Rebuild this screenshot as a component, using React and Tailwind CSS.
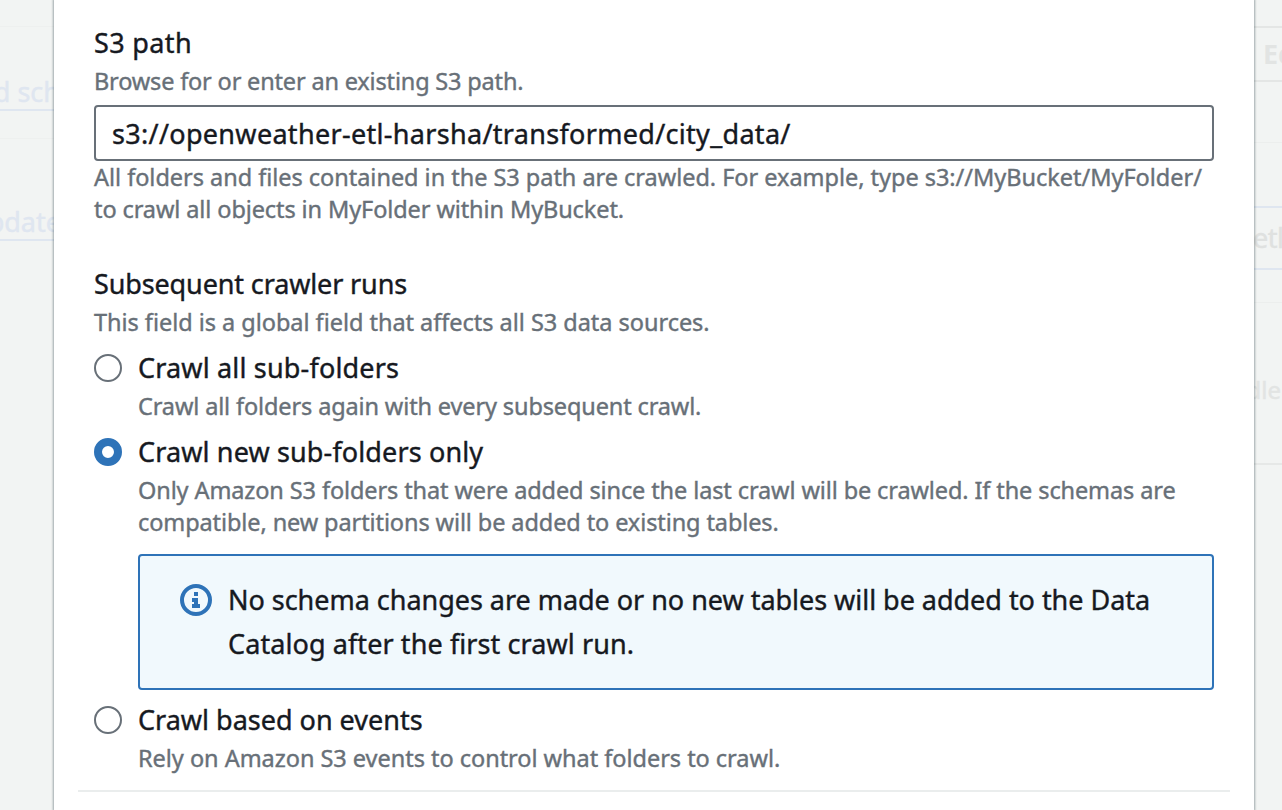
const label = "h-11 text-[27px] leading-[44px] text-[#16191f] whitespace-nowrap [-webkit-text-stroke:0.4px]";
const hint = "h-8 text-[23.5px] leading-[30px] text-[#687078] whitespace-nowrap [-webkit-text-stroke:0.4px]";

function Radio({ checked }) {
  return (
    <span
      className={
        checked
          ? "mt-2 size-7 shrink-0 rounded-full border-[8.5px] border-[#2e73b8] bg-white"
          : "mt-2 size-7 shrink-0 rounded-full border-2 border-[#687078] bg-white"
      }
    />
  );
}

function InfoIcon() {
  return (
    <svg viewBox="0 0 32 32" className="mt-1.5 size-8 shrink-0" fill="#2e73b8">
      <circle cx="16" cy="16" r="14" fill="none" stroke="#2e73b8" strokeWidth="4" />
      <path d="M14 8h4v4h-4zM12 14h6v6h2v4h-8v-4h2v-2h-2z" />
    </svg>
  );
}

function LeftBackdrop() {
  return (
    <div className="flex w-[54px] shrink-0 flex-col overflow-hidden bg-[#f2f4f3]">
      <div className="h-[27px] shrink-0 border-b border-[#eef0ef]" />
      <div className="flex h-[84px] shrink-0 items-end justify-end border-b-2 border-[#dfe6f0]">
        <span className="mr-[-6px] h-[38px] text-[27px] leading-[41px] whitespace-nowrap text-[#dfe6f0] [-webkit-text-stroke:0.4px]">d sch</span>
      </div>
      <div className="h-7 shrink-0 border-b border-[#eef0ef]" />
      <div className="flex h-[102px] shrink-0 items-end justify-end border-b-2 border-[#dfe6f0]">
        <span className="mr-[-7px] h-[38px] text-[27px] leading-[41px] whitespace-nowrap text-[#dfe6f0] [-webkit-text-stroke:0.4px]">pdate</span>
      </div>
    </div>
  );
}

function RightBackdrop() {
  return (
    <div className="flex w-7 shrink-0 flex-col overflow-hidden bg-[#f2f4f3]">
      <div className="h-[26px] shrink-0" />
      <div className="h-14 shrink-0 border-y-2 border-[#e4e6e5] pl-[9px] text-[27px] leading-[52px] font-bold whitespace-nowrap text-[#e2e4e3]">
        Ed
      </div>
      <div className="h-[61px] shrink-0 border-b border-[#eceeed]" />
      <div className="h-[63px] shrink-0" />
      <div className="h-16 shrink-0 border-y-2 border-[#dfe6f0] text-[27px] leading-[60px] whitespace-nowrap text-[#dfe1e0] [-webkit-text-stroke:0.4px]">
        <span className="ml-[-1px] tracking-[-0.5px]">etl</span>
      </div>
      <div className="h-[33px] shrink-0 border-b border-[#eceeed]" />
      <div className="flex h-[162px] shrink-0 items-start justify-end border-b-2 border-[#e6e8e7] pt-[71px]">
        <span className="mr-px text-[24px] leading-8 whitespace-nowrap text-[#e2e4e3] [-webkit-text-stroke:0.4px]">dle</span>
      </div>
    </div>
  );
}

export default function App() {
  return (
    <div className="flex h-[810px] w-[1282px] overflow-hidden bg-[#f2f4f3] font-['Noto_Sans',sans-serif]">
      <LeftBackdrop />
      <main className="relative z-10 flex w-[1200px] shrink-0 flex-col bg-white px-10 pt-[21px] shadow-[0_0_2px_1px_rgba(0,28,36,0.35)]">
        <div className={label}><span className="tracking-[0.36px]">S3 path</span></div>
        <div className={hint + " mt-px"}><span className="tracking-[-0.17px]">Browse for or enter an existing S3 path.</span></div>
        <div className="mt-[7px] flex h-14 shrink-0 items-center rounded-[4px] border-2 border-[#687078] px-4">
          <span className="pt-0.5 text-[27px] leading-[44px] tracking-[0.31px] whitespace-nowrap text-[#16191f] [-webkit-text-stroke:0.4px]">s3://openweather-etl-harsha/transformed/city_data/</span>
        </div>
        <div className="mt-px">
          <div className={hint}><span className="tracking-[-0.03px]">All folders and files contained in the S3 path are crawled. For example, type s3://MyBucket/MyFolder/</span></div>
          <div className={hint}><span className="tracking-[-0.1px]">to crawl all objects in MyFolder within MyBucket.</span></div>
        </div>

        <div className="mt-9">
          <div className={label}><span className="tracking-[-0.13px]">Subsequent crawler runs</span></div>
          <div className={hint + " mt-px"}><span className="tracking-[-0.03px]">This field is a global field that affects all S3 data sources.</span></div>
        </div>

        <div className="mt-[7px] flex gap-4">
          <Radio />
          <div>
            <div className={label}><span className="tracking-[0.17px]">Crawl all sub-folders</span></div>
            <div className={hint + " mt-px"}><span className="tracking-[-0.13px]">Crawl all folders again with every subsequent crawl.</span></div>
          </div>
        </div>

        <div className="mt-[7px] flex gap-4">
          <Radio checked />
          <div className="grow">
            <div className={label}><span className="tracking-[0.13px]">Crawl new sub-folders only</span></div>
            <div className={hint + " mt-px"}><span className="tracking-[-0.11px]">Only Amazon S3 folders that were added since the last crawl will be crawled. If the schemas are</span></div>
            <div className={hint}><span className="tracking-[-0.1px]">compatible, new partitions will be added to existing tables.</span></div>
            <div className="mt-[15px] flex h-[136px] gap-4 rounded-[4px] border-2 border-[#2e73b8] bg-[#f1f9fd] pt-[22px] pl-10">
              <InfoIcon />
              <div>
                <div className={label}><span className="tracking-[-0.03px]">No schema changes are made or no new tables will be added to the Data</span></div>
                <div className={label}><span className="tracking-[0.09px]">Catalog after the first crawl run.</span></div>
              </div>
            </div>
          </div>
        </div>

        <div className="mt-2 flex gap-4">
          <Radio />
          <div>
            <div className={label}><span>Crawl based on events</span></div>
            <div className={hint + " mt-px"}><span className="tracking-[-0.03px]">Rely on Amazon S3 events to control what folders to crawl.</span></div>
          </div>
        </div>

        <div className="-mx-4 mt-[15px] h-0.5 shrink-0 bg-[#eaeded]" />
      </main>
      <RightBackdrop />
    </div>
  );
}
